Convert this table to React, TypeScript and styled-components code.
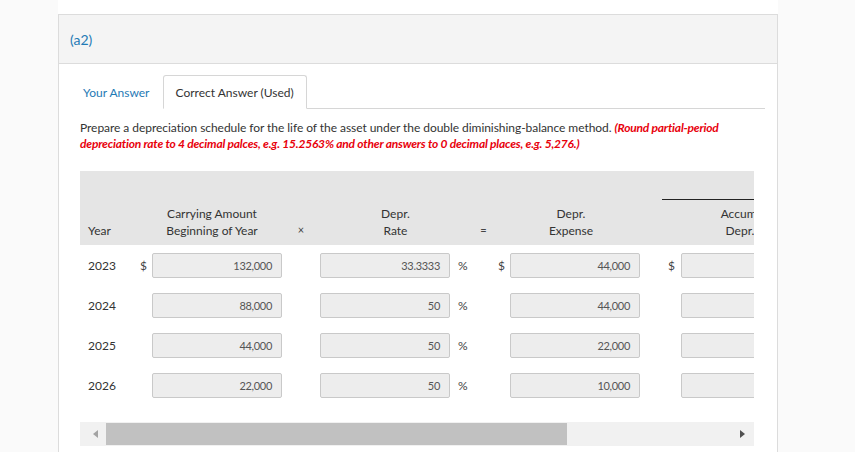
import React from "react";
import styled, { createGlobalStyle } from "styled-components";

const GlobalStyle = createGlobalStyle`
  html, body { margin: 0; padding: 0; background: #fafafa; }
  body { font-family: Lato, "Noto Sans", sans-serif; color: #333; }
  * { box-sizing: border-box; }
`;

const Page = styled.div`
  width: 720px;
  margin-left: 58px;
  height: 452px;
  overflow: hidden;
  background: #fff;
  padding-top: 14px;
`;

const Card = styled.section`
  border: 1px solid #dcdcdc;
  border-bottom: none;
  height: 100%;
`;

const CardHeader = styled.header`
  height: 49px;
  background: #f4f4f4;
  border-bottom: 1px solid #dcdcdc;
  display: flex;
  align-items: center;
  padding-left: 11px;
  font-size: 14px;
  color: #1f7ab5;
`;

const Body = styled.div`
  padding: 11px 12px 0 11px;
`;

const TabBar = styled.div`
  display: flex;
  align-items: flex-end;
  height: 34px;
  border-bottom: 1px solid #d6d6d6;
`;

const Tab = styled.div<{ $active?: boolean }>`
  height: 34px;
  padding: 0 12px;
  display: flex;
  align-items: center;
  font-size: 12px;
  color: ${(p) => (p.$active ? "#333" : "#1f7ab5")};
  background: #fff;
  border: 1px solid ${(p) => (p.$active ? "#d6d6d6" : "transparent")};
  border-bottom: ${(p) => (p.$active ? "1px solid #fff" : "none")};
  border-radius: 3px 3px 0 0;
  margin-bottom: -1px;
`;

const Content = styled.div`
  padding: 0 0 0 10px;
  width: 684px;
`;

const Instructions = styled.p`
  margin: 11px 0 0 0;
  font-size: 12px;
  line-height: 16px;
  letter-spacing: -0.05px;
  color: #333;
`;

const Hint = styled.strong`
  color: #e8000b;
  font-style: italic;
  font-weight: 700;
  letter-spacing: -0.2px;
`;

const Scroller = styled.div`
  margin-top: 19px;
  width: 674px;
  overflow: hidden;
`;

const cols =
  "57px 15px 130px 38px 130px 25px 17px 18px 130px 28px 13px 130px 40px 130px";

const HeaderRow = styled.div`
  display: grid;
  grid-template-columns: ${cols};
  grid-template-rows: 74px;
  width: max-content;
  background: #e5e5e5;
  align-items: end;
  font-size: 12px;
  line-height: 17px;
  color: #333;
`;

const HeadCell = styled.div<{ $col: string; $align?: string; $shift?: number }>`
  grid-column: ${(p) => p.$col};
  grid-row: 1;
  padding-bottom: 6px;
  text-align: ${(p) => p.$align || "center"};
  padding-left: ${(p) => (p.$shift && p.$shift > 0 ? p.$shift : 0)}px;
  padding-right: ${(p) => (p.$shift && p.$shift < 0 ? -p.$shift : 0)}px;
  white-space: nowrap;
`;

const Overline = styled.div`
  grid-column: 10 / 15;
  grid-row: 1;
  align-self: start;
  margin-top: 28px;
  margin-left: 22px;
  border-top: 1px solid #222;
`;

const Op = styled.div<{ $col: string }>`
  grid-column: ${(p) => p.$col};
  grid-row: 1;
  padding-bottom: 7px;
  text-align: center;
  font-size: 11px;
  color: #444;
`;

const Rows = styled.div`
  display: flex;
  flex-direction: column;
  gap: 15px;
  padding-top: 8px;
`;

const Row = styled.div`
  display: grid;
  grid-template-columns: ${cols};
  width: max-content;
  align-items: center;
  height: 25px;
  font-size: 12px;
  color: #333;
`;

const YearCell = styled.div`
  padding-left: 8px;
`;

const Sym = styled.div<{ $pad?: number }>`
  padding-left: ${(p) => p.$pad ?? 3}px;
  color: #444;
  font-size: 12px;
`;

const Field = styled.div`
  height: 25px;
  background: #ededed;
  border: 1px solid #c9c9c9;
  border-radius: 2px;
  display: flex;
  align-items: center;
  justify-content: flex-end;
  padding-right: 9px;
  font-size: 11px;
  letter-spacing: -0.3px;
  color: #555;
`;

const ScrollTrack = styled.div`
  margin-top: 24px;
  width: 674px;
  height: 24px;
  background: #f1f1f1;
  position: relative;
`;

const Thumb = styled.div`
  position: absolute;
  left: 26px;
  top: 1px;
  width: 461px;
  height: 22px;
  background: #c1c1c1;
`;

const Arrow = styled.div<{ $dir: "left" | "right"; $color: string }>`
  position: absolute;
  top: 8px;
  ${(p) => (p.$dir === "left" ? "left: 13px;" : "right: 9px;")}
  width: 0;
  height: 0;
  border-top: 4px solid transparent;
  border-bottom: 4px solid transparent;
  ${(p) =>
    p.$dir === "left"
      ? `border-right: 5px solid ${p.$color};`
      : `border-left: 5px solid ${p.$color};`}
`;

type RowData = { year: string; carrying: string; rate: string; expense: string };

const data: RowData[] = [
  { year: "2023", carrying: "132,000", rate: "33.3333", expense: "44,000" },
  { year: "2024", carrying: "88,000", rate: "50", expense: "44,000" },
  { year: "2025", carrying: "44,000", rate: "50", expense: "22,000" },
  { year: "2026", carrying: "22,000", rate: "50", expense: "10,000" },
];

export default function App() {
  return (
    <>
      <GlobalStyle />
      <Page>
        <Card>
          <CardHeader>(a2)</CardHeader>
          <Body>
            <TabBar>
              <Tab>Your Answer</Tab>
              <Tab $active>Correct Answer (Used)</Tab>
            </TabBar>
            <Content>
              <Instructions>
                Prepare a depreciation schedule for the life of the asset under the double
                diminishing-balance method.{" "}
                <Hint>
                  (Round partial-period depreciation rate to 4 decimal palces, e.g. 15.2563% and
                  other answers to 0 decimal places, e.g. 5,276.)
                </Hint>
              </Instructions>
              <Scroller>
                <HeaderRow>
                  <HeadCell $col="1" $align="left" $shift={8}>
                    Year
                  </HeadCell>
                  <HeadCell $col="2 / 4" $shift={5}>
                    Carrying Amount
                    <br />
                    Beginning of Year
                  </HeadCell>
                  <Op $col="4">×</Op>
                  <HeadCell $col="5 / 7" $shift={-4}>
                    Depr.
                    <br />
                    Rate
                  </HeadCell>
                  <Op $col="7">=</Op>
                  <HeadCell $col="9" $shift={-8}>
                    Depr.
                    <br />
                    Expense
                  </HeadCell>
                  <Overline />
                  <HeadCell $col="12" $shift={-12}>
                    Accum.
                    <br />
                    Depr.
                  </HeadCell>
                  <HeadCell $col="14">
                    Book
                    <br />
                    Value
                  </HeadCell>
                </HeaderRow>
                <Rows>
                  {data.map((r, i) => (
                    <Row key={r.year}>
                      <YearCell>{r.year}</YearCell>
                      <Sym>{i === 0 ? "$" : ""}</Sym>
                      <Field>{r.carrying}</Field>
                      <div />
                      <Field>{r.rate}</Field>
                      <Sym $pad={8}>%</Sym>
                      <div />
                      <Sym $pad={6}>{i === 0 ? "$" : ""}</Sym>
                      <Field>{r.expense}</Field>
                      <div />
                      <Sym $pad={0}>{i === 0 ? "$" : ""}</Sym>
                      <Field />
                      <div />
                      <Field />
                    </Row>
                  ))}
                </Rows>
              </Scroller>
              <ScrollTrack>
                <Arrow $dir="left" $color="#a3a3a3" />
                <Thumb />
                <Arrow $dir="right" $color="#505050" />
              </ScrollTrack>
            </Content>
          </Body>
        </Card>
      </Page>
    </>
  );
}
